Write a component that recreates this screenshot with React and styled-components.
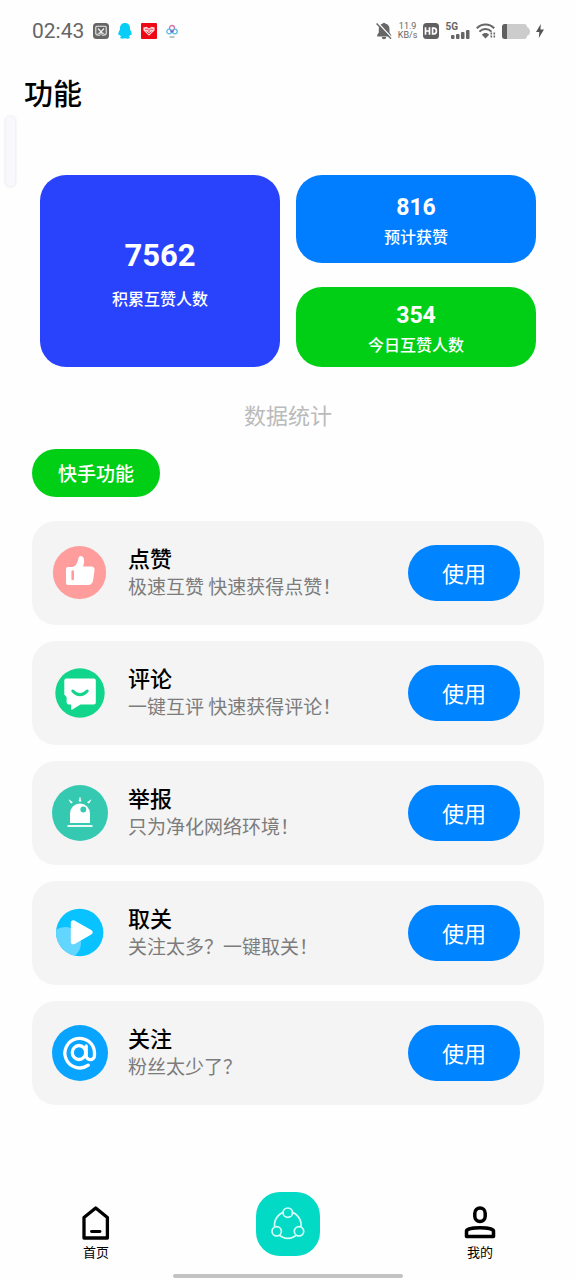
import React from "react";
import styled, { createGlobalStyle } from "styled-components";

const sans = `Roboto, "Noto Sans CJK SC", sans-serif`;
const cjk = `"Noto Sans CJK SC", sans-serif`;

const GlobalStyle = createGlobalStyle`
  *, *::before, *::after { box-sizing: border-box; }
  body { margin: 0; background: #fefefe; font-family: ${cjk}; color: #000; }
  h1, h2, h3, p, ul { margin: 0; padding: 0; }
  svg { display: block; flex: none; }
  button { font: inherit; border: 0; cursor: pointer; }
`;

const Page = styled.div`
  position: relative;
  min-height: 100vh;
  display: flex;
  flex-direction: column;
`;

const StatusBar = styled.header`
  height: 62px;
  padding: 0 32px;
  display: flex;
  align-items: center;
  justify-content: space-between;
  color: #666;
  font-family: ${sans};
`;

const StatusGroup = styled.div`
  display: flex;
  align-items: center;
  gap: ${(p) => p.$gap}px;
`;

const Clock = styled.time`
  font-size: 21px;
  line-height: 24px;
`;

const NetSpeed = styled.span`
  font-size: 9px;
  line-height: 9px;
  text-align: center;
`;

const PageTitle = styled.h1`
  padding: 8px 24px 12px;
  font-size: 29px;
  line-height: 44px;
  font-weight: 500;
`;

const EdgeHandle = styled.div`
  position: absolute;
  left: 6px;
  top: 117px;
  width: 9px;
  height: 69px;
  border-radius: 5px;
  background: #f9f9fd;
  box-shadow: 0 0 3px 1px #ebebf0;
`;

const Stats = styled.section`
  margin: 49px 40px 0;
  display: grid;
  grid-template-columns: 1fr 1fr;
  grid-template-rows: 88px 80px;
  gap: 24px 16px;
`;

const StatCard = styled.div`
  grid-row: ${(p) => (p.$large ? "span 2" : "auto")};
  display: flex;
  flex-direction: column;
  align-items: center;
  justify-content: center;
  gap: ${(p) => (p.$large ? 10 : 0)}px;
  padding-top: ${(p) => (p.$large ? 4 : 6)}px;
  border-radius: 26px;
  background: ${(p) => p.$color};
  color: #fff;
`;

const StatValue = styled.strong`
  font-family: ${sans};
  font-weight: 700;
  font-size: ${(p) => (p.$large ? 31 : 23)}px;
  line-height: ${(p) => (p.$large ? 40 : 28)}px;
`;

const StatLabel = styled.span`
  font-size: 16px;
  font-weight: 500;
  line-height: ${(p) => (p.$large ? 24 : 28)}px;
`;

const StatsCaption = styled.h2`
  margin-top: 31px;
  text-align: center;
  font-size: 22px;
  line-height: 32px;
  font-weight: 400;
  color: #bbb;
`;

const CategoryButton = styled.button`
  align-self: flex-start;
  margin: 19px 32px 24px;
  width: 128px;
  height: 48px;
  padding: 0 0 2px;
  border-radius: 24px;
  background: #00cf15;
  color: #fff;
  font-size: 19px;
  font-weight: 500;
`;

const FeatureList = styled.ul`
  margin: 0 32px;
  list-style: none;
  display: flex;
  flex-direction: column;
  gap: 16px;
`;

const FeatureCard = styled.li`
  height: 104px;
  padding: 0 24px 0 20px;
  display: flex;
  align-items: center;
  gap: 20px;
  border-radius: 24px;
  background: #f4f4f4;
`;

const FeatureText = styled.div`
  flex: 1;
  min-width: 0;
  padding-bottom: 2px;
`;

const FeatureName = styled.h3`
  font-size: 22px;
  line-height: 28px;
  font-weight: 500;
`;

const FeatureHint = styled.p`
  font-size: 19px;
  line-height: 30px;
  font-weight: 400;
  color: #7c7c7c;
`;

const UseButton = styled.button`
  width: 112px;
  height: 56px;
  padding: 0 0 2px;
  border-radius: 28px;
  background: #0084ff;
  color: #fff;
  font-size: 22px;
  font-weight: 400;
`;

const TabBar = styled.nav`
  margin-top: auto;
  padding-top: 24px;
  display: grid;
  grid-template-columns: repeat(3, 1fr);
  justify-items: center;
  align-items: start;
`;

const TabLink = styled.a`
  display: flex;
  flex-direction: column;
  align-items: center;
  gap: 2px;
  padding-top: 12px;
  color: #000;
  text-decoration: none;
  font-size: 13px;
  line-height: 20px;
`;

const ShareButton = styled.button`
  width: 64px;
  height: 64px;
  padding: 0;
  border-radius: 24px;
  background: #03dac5;
`;

const HomeIndicator = styled.div`
  align-self: center;
  width: 40%;
  height: 4px;
  margin: 12px 0 2px;
  border-radius: 2px;
  background: #c2c2c2;
`;

const ShotIcon = () => (
  <svg width="16" height="16" viewBox="0 0 16 16" fill="none" aria-hidden="true">
    <rect width="16" height="16" rx="3.5" fill="#666" />
    <path d="M5 12H4.2A1.4 1.4 0 0 1 2.8 10.600V4.600a1.300 1.300 0 0 1 1.300-1.300h7.800a1.300 1.300 0 0 1 1.300 1.300v6A1.400 1.400 0 0 1 11.800 12H11" stroke="#eee" strokeWidth="1.100" />
    <path d="M5 5.500l4.500 5M11 5.500l-4.500 5" stroke="#eee" strokeWidth="1.300" />
    <circle cx="6" cy="11.300" r="1.200" stroke="#eee" strokeWidth=".9" />
    <circle cx="10" cy="11.300" r="1.200" stroke="#eee" strokeWidth=".9" />
  </svg>
);

const PenguinIcon = () => (
  <svg width="14" height="16" viewBox="0 0 14 16" fill="#08cdf7" aria-hidden="true">
    <path d="M7 0c3.200 0 5 2.200 5 5.200v1.300c1 1.600 2 3.400 1.600 5.500-.3.700-1 .1-1.500-.2-.2.900-.6 1.300-1.200 1.900.8.300 1.100.8.800 1.300-.5.900-3.500.7-4.700.2-1.200.5-4.200.7-4.700-.2-.3-.5 0-1 .8-1.300-.6-.6-1-1-1.200-1.900-.5.300-1.200.9-1.500.2C0 9.900 1 8.100 2 6.500V5.200C2 2.200 3.800 0 7 0z" />
  </svg>
);

const RedAppIcon = () => (
  <svg width="16" height="16" viewBox="0 0 16 16" fill="none" aria-hidden="true">
    <rect width="16" height="16" rx="1" fill="#ee0714" />
    <path d="M8 12.800L2.500 7.500 2.300 4.500l3-.8L8 5.200l2.700-1.500 3 .8-.2 3z" fill="#ffd5d8" />
    <path d="M4 6.500l2.500-.5L8 7.500 9.500 6l2.500.5M5.500 8.500L8 11l2.500-2.500M8 7.500v2" stroke="#ee0714" strokeWidth=".7" />
  </svg>
);

const CloudIcon = () => (
  <svg width="12" height="14" viewBox="0 0 12 14" fill="none" strokeWidth="1.300" aria-hidden="true">
    <circle cx="6" cy="4" r="2.500" stroke="#d675a8" />
    <circle cx="3.100" cy="7.500" r="2.300" stroke="#62b9e8" />
    <circle cx="8.900" cy="7.500" r="2.300" stroke="#55bfe0" />
    <path d="M4.500 6.500L6 8l1.500-1.500" stroke="#6a62c4" />
    <path d="M3.500 13h5" stroke="#888" strokeWidth="1" />
  </svg>
);

const MutedBellIcon = () => (
  <svg width="16" height="18" viewBox="0 0 16 18" fill="#666" aria-hidden="true">
    <path d="M6.800 1.600a1.300 1.300 0 0 1 2.400 0c3 .7 4.300 2.600 4.300 5.300v3.500l1.700 2.600v1.500H1.200V13l1.600-2.600V6.900c0-2.700 1.200-4.600 4-5.300z" />
    <path d="M5.800 15h4.400a2.200 2.200 0 0 1-4.400 0z" />
    <path d="M1.600 .6L15.800 15.800" stroke="#fefefe" strokeWidth="1.400" />
    <path d="M.6 1.400L15 16.800" stroke="#666" strokeWidth="1.400" />
  </svg>
);

const HdIcon = () => (
  <svg width="16" height="16" viewBox="0 0 16 16" fill="none" stroke="#fff" strokeWidth="1.700" aria-hidden="true">
    <rect width="16" height="16" rx="3.500" fill="#606060" stroke="none" />
    <path d="M2.500 4.300v7.400M6.500 4.300v7.400M2.500 8h4M9.600 5.100h1.400c1.700 0 2.400.9 2.400 2.900s-.7 2.900-2.400 2.900H9.600z" />
  </svg>
);

const SignalBox = styled.span`
  display: flex;
  align-items: flex-end;
  height: 18px;
`;

const SignalName = styled.span`
  align-self: flex-start;
  margin-right: -8px;
  font-size: 10px;
  line-height: 10px;
  font-weight: 700;
`;

const Signal = () => (
  <SignalBox>
    <SignalName>5G</SignalName>
    <svg width="20" height="10" viewBox="0 0 20 10" fill="#666" aria-hidden="true">
      <rect x="1" y="5" width="3.500" height="4" rx="1" />
      <rect x="6" y="4" width="3.500" height="5" rx="1" />
      <rect x="11" y="2" width="3.500" height="7" rx="1" />
      <rect x="16" y="0" width="3.500" height="9" rx="1" />
    </svg>
  </SignalBox>
);

const WifiIcon = () => (
  <svg width="20" height="16" viewBox="0 0 20 16" fill="none" stroke="#666" strokeWidth="2" aria-hidden="true">
    <path d="M.8 5.300c5-5 12.400-5 17.400 0M3.400 8.600c3.600-3.500 8.500-3.500 12.100 0" />
    <path d="M5.800 11.700c2.200-2.200 5.200-2.200 7.400 0L9.500 15.500z" fill="#666" stroke="none" />
    <path d="M15.300 9.500v2M15.300 12.500v2M18.300 9.500v2M18.300 12.500v2" strokeWidth="1.600" />
  </svg>
);

const BatteryIcon = () => (
  <svg width="28" height="15" viewBox="0 0 28 15" aria-hidden="true">
    <rect width="25" height="15" rx="3" fill="#ccc" />
    <path d="M25 3c2 1 3 2.500 3 4.500S27 11 25 12z" fill="#ccc" />
    <path d="M3 0h2v15H3a3 3 0 0 1-3-3V3a3 3 0 0 1 3-3z" fill="#606060" />
  </svg>
);

const BoltIcon = () => (
  <svg width="8" height="14" viewBox="0 0 8 14" fill="#555" aria-hidden="true">
    <path d="M4.800 0L0 8h3.300L2.800 14 8 5.600H4.500z" />
  </svg>
);

const LikeIcon = () => (
  <svg width="56" height="56" viewBox="0 0 56 56" fill="none" aria-hidden="true">
    <circle cx="27.500" cy="27.500" r="26.600" fill="#ff9d9d" />
    <path d="M16 22h4.500c3.400-1.200 4.800-3.400 5.600-7.300.5-2.600 1.300-3.700 2.800-3.700 2.300 0 3.400 2.300 3.200 5.200-.1 2.100-.5 3.700-1 5.300h8c2.600 0 3.800 1.600 3.400 4.200L41 35.800c-.5 2.700-2 4.200-4.600 4.200H16c-1.300 0-2-.7-2-2V24c0-1.300.7-2 2-2z" fill="#fff" />
    <path d="M20.700 26.500v7.500" stroke="#ff9d9d" strokeWidth="2.600" strokeLinecap="round" />
  </svg>
);

const CommentIcon = () => (
  <svg width="56" height="56" viewBox="0 0 56 56" fill="none" aria-hidden="true">
    <circle cx="28" cy="28" r="24.700" fill="#11d58b" />
    <path d="M14.300 13.500h27.500a2 2 0 0 1 2 2v22a2 2 0 0 1-2 2H28.500l-8.200 5c-.7.400-1.200.1-1.200-.7v-4.300h-2.500a2 2 0 0 1-2-2V32l-1.300-1.300-1-1.200V15.500a2 2 0 0 1 2-2z" fill="#fff" />
    <path d="M20.800 26c4.400 5 10 5 14.400 0" stroke="#11d58b" strokeWidth="3" strokeLinecap="round" />
  </svg>
);

const ReportIcon = () => (
  <svg width="56" height="56" viewBox="0 0 56 56" fill="none" aria-hidden="true">
    <circle cx="28" cy="28" r="28" fill="#36c9b2" />
    <path d="M18 38V28.500a10 10 0 0 1 20 0V38z" fill="#fff" />
    <circle cx="31.300" cy="24.500" r="2.900" fill="#36c9b2" />
    <path d="M15.500 41h25" stroke="#fff" strokeWidth="1.800" />
    <path d="M28 12.200l1 4h-2zM17 14.800l3.500 2.400-1.500 1zM39 14.800l-3.500 2.400 1.500 1z" fill="#fff" stroke="#fff" strokeWidth=".5" />
  </svg>
);

const PlayIcon = () => (
  <svg width="56" height="56" viewBox="0 0 56 56" fill="none" aria-hidden="true">
    <defs>
      <clipPath id="play-disc">
        <circle cx="27.700" cy="27.500" r="23.700" />
      </clipPath>
    </defs>
    <circle cx="27.700" cy="27.500" r="23.700" fill="#08c3ff" />
    <circle cx="13" cy="38" r="16" fill="#62d6ff" clipPath="url(#play-disc)" />
    <path d="M18.800 18v18.700c0 2.300 2 3.300 4 2.200l16.400-9.300c2-1.200 2-3.300 0-4.500L22.800 15.800c-2-1.100-4-.1-4 2.200z" fill="#fff" />
  </svg>
);

const FollowIcon = () => (
  <svg width="56" height="56" viewBox="0 0 56 56" fill="none" stroke="#fff" strokeWidth="3.300" strokeLinecap="round" aria-hidden="true">
    <circle cx="28" cy="28" r="28" fill="#08a4ff" stroke="none" />
    <path d="M36.300 40.200A14.800 14.800 0 1 1 42.500 28v2.300c0 5.700-8.300 5.700-8.300 0V21" />
    <ellipse cx="27" cy="27.500" rx="6.700" ry="7" />
  </svg>
);

const HomeIcon = () => (
  <svg width="32" height="36" viewBox="0 0 32 36" fill="none" stroke="#000" strokeWidth="3.300" strokeLinejoin="round" aria-hidden="true">
    <path d="M4 13.500L15.700 4l11.700 9.500V34H4z" />
    <path d="M11.500 27.500h8.500" strokeWidth="2.800" strokeLinecap="round" />
  </svg>
);

const ProfileIcon = () => (
  <svg width="32" height="36" viewBox="0 0 32 36" fill="none" stroke="#000" strokeWidth="3.500" strokeLinejoin="round" aria-hidden="true">
    <rect x="10.800" y="4" width="10.400" height="13.500" rx="5.200" />
    <path d="M2.500 32.500V27c0-4.200 27-4.200 27 0v5.500z" />
  </svg>
);

const ShareIcon = () => (
  <svg width="64" height="64" viewBox="0 0 64 64" fill="#03dac5" stroke="#d9fffa" strokeWidth="1.700" aria-hidden="true">
    <circle cx="31.800" cy="33" r="13.300" />
    <circle cx="31.800" cy="20.700" r="4.700" />
    <circle cx="20.700" cy="39.300" r="4.700" />
    <circle cx="43" cy="39.300" r="4.700" />
  </svg>
);

const stats = [
  { value: "7562", label: "积累互赞人数", color: "#2943fd", large: true },
  { value: "816", label: "预计获赞", color: "#007eff" },
  { value: "354", label: "今日互赞人数", color: "#00cf15" },
];

const features = [
  { name: "点赞", hint: "极速互赞 快速获得点赞！", Icon: LikeIcon },
  { name: "评论", hint: "一键互评 快速获得评论！", Icon: CommentIcon },
  { name: "举报", hint: "只为净化网络环境！", Icon: ReportIcon },
  { name: "取关", hint: "关注太多？一键取关！", Icon: PlayIcon },
  { name: "关注", hint: "粉丝太少了？", Icon: FollowIcon },
];

export default function App() {
  return (
    <Page>
      <GlobalStyle />
      <StatusBar>
        <StatusGroup $gap={9}>
          <Clock>02:43</Clock>
          <ShotIcon />
          <PenguinIcon />
          <RedAppIcon />
          <CloudIcon />
        </StatusGroup>
        <StatusGroup $gap={6}>
          <MutedBellIcon />
          <NetSpeed>
            11.9
            <br />
            KB/s
          </NetSpeed>
          <HdIcon />
          <Signal />
          <WifiIcon />
          <BatteryIcon />
          <BoltIcon />
        </StatusGroup>
      </StatusBar>
      <PageTitle>功能</PageTitle>
      <EdgeHandle />
      <Stats>
        {stats.map((s) => (
          <StatCard key={s.label} $large={s.large} $color={s.color}>
            <StatValue $large={s.large}>{s.value}</StatValue>
            <StatLabel $large={s.large}>{s.label}</StatLabel>
          </StatCard>
        ))}
      </Stats>
      <StatsCaption>数据统计</StatsCaption>
      <CategoryButton type="button">快手功能</CategoryButton>
      <FeatureList>
        {features.map(({ name, hint, Icon }) => (
          <FeatureCard key={name}>
            <Icon />
            <FeatureText>
              <FeatureName>{name}</FeatureName>
              <FeatureHint>{hint}</FeatureHint>
            </FeatureText>
            <UseButton type="button">使用</UseButton>
          </FeatureCard>
        ))}
      </FeatureList>
      <TabBar>
        <TabLink href="#home">
          <HomeIcon />
          首页
        </TabLink>
        <ShareButton type="button" aria-label="分享">
          <ShareIcon />
        </ShareButton>
        <TabLink href="#me">
          <ProfileIcon />
          我的
        </TabLink>
      </TabBar>
      <HomeIndicator />
    </Page>
  );
}
